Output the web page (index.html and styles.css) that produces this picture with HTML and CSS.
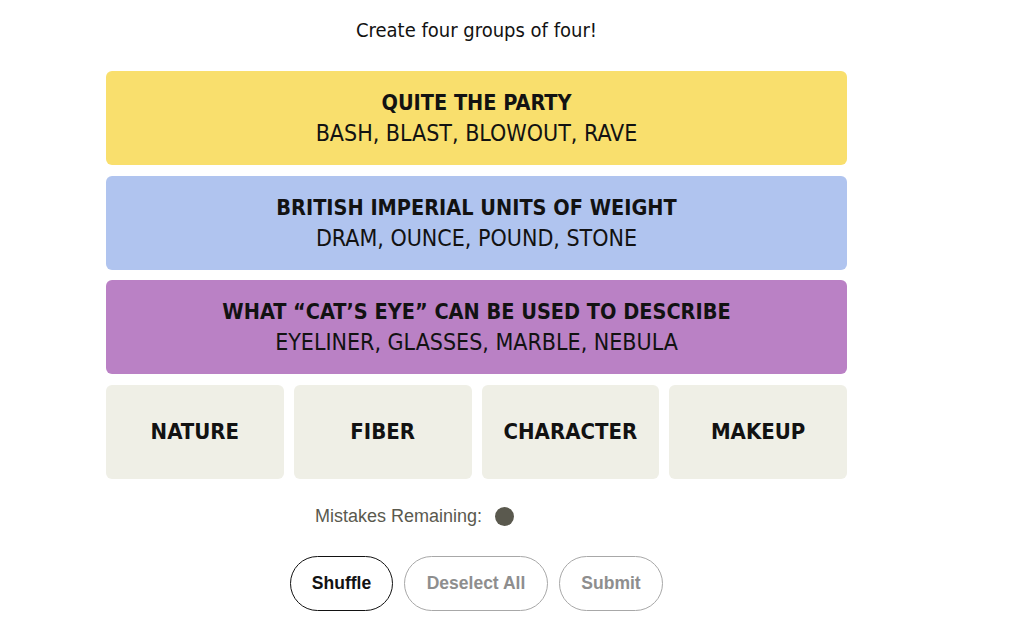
FILE: index.html
```html
<!DOCTYPE html>
<html lang="en">
<head>
    <meta charset="UTF-8">
    <meta name="viewport" content="width=device-width, initial-scale=1.0">
    <title>Connections</title>
    <link rel="stylesheet" href="styles.css">
</head>
<body>
    <div id="game">
        <p class="prompt">Create four groups of four!</p>

        <div class="board">
            <div class="solved yellow">
                <h3>QUITE THE PARTY</h3>
                <p>BASH, BLAST, BLOWOUT, RAVE</p>
            </div>
            <div class="solved blue">
                <h3>BRITISH IMPERIAL UNITS OF WEIGHT</h3>
                <p>DRAM, OUNCE, POUND, STONE</p>
            </div>
            <div class="solved purple">
                <h3>WHAT &ldquo;CAT&rsquo;S EYE&rdquo; CAN BE USED TO DESCRIBE</h3>
                <p>EYELINER, GLASSES, MARBLE, NEBULA</p>
            </div>
            <div class="tiles">
                <button class="tile">NATURE</button>
                <button class="tile">FIBER</button>
                <button class="tile">CHARACTER</button>
                <button class="tile">MAKEUP</button>
            </div>
        </div>

        <div class="mistakes">
            <span>Mistakes Remaining:</span>
            <span class="dot"></span>
        </div>

        <div class="controls">
            <button class="pill active shuffle">Shuffle</button>
            <button class="pill deselect" disabled>Deselect All</button>
            <button class="pill submit" disabled>Submit</button>
        </div>
    </div>
</body>
</html>
```

FILE: styles.css
```css
body {
    margin: 0;
    background: #fff;
    color: #121212;
    font-family: "DejaVu Sans Condensed", "Liberation Sans", sans-serif;
}

#game {
    width: 741px;
    margin-left: 106px;
}

.prompt {
    margin: 18px 0 29px;
    font-size: 20px;
    line-height: 24px;
    text-align: center;
}

.board {
    display: grid;
    grid-template-rows: repeat(4, 94px);
    row-gap: 10.5px;
}

.solved {
    display: flex;
    flex-direction: column;
    justify-content: center;
    align-items: center;
    border-radius: 6px;
}

.solved h3,
.solved p {
    margin: 0;
    line-height: 30px;
}

.solved h3 {
    font-size: 21.5px;
    font-weight: bold;
}

.solved p {
    font-size: 23px;
}

.yellow { background: #f9df6d; }
.blue { background: #b0c4ef; }
.purple { background: #ba81c5; }

.tiles {
    display: grid;
    grid-template-columns: repeat(4, 1fr);
    column-gap: 10px;
}

.tile {
    border: none;
    border-radius: 6px;
    background: #efefe6;
    color: #121212;
    font-family: inherit;
    font-size: 22px;
    font-weight: bold;
}

.mistakes {
    display: flex;
    align-items: center;
    gap: 13px;
    margin-top: 26px;
    padding-left: 209px;
    height: 24px;
    font-family: "Liberation Sans", Arial, sans-serif;
    font-size: 18px;
    color: #5a594e;
}

.dot {
    width: 19px;
    height: 19px;
    border-radius: 50%;
    background: #5a594e;
}

.controls {
    display: flex;
    justify-content: center;
    gap: 11px;
    margin-top: 27px;
}

.pill {
    height: 55px;
    border: 1px solid #a8a8a8;
    border-radius: 28px;
    background: #fff;
    color: #8e8e8e;
    font-family: "Liberation Sans", Arial, sans-serif;
    font-size: 17.5px;
    font-weight: bold;
}

.pill.active {
    border-color: #121212;
    color: #121212;
}

.shuffle { width: 103px; }
.deselect { width: 144px; }
.submit { width: 104px; }
```
